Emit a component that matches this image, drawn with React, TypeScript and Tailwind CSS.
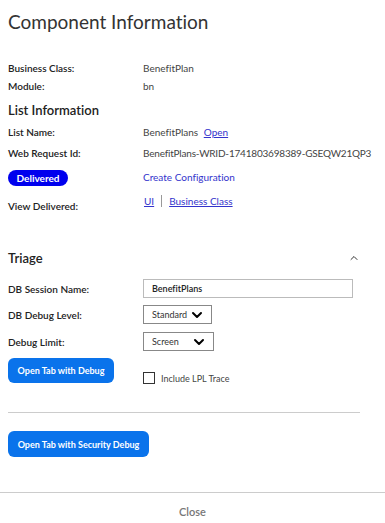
import { ChevronDown, ChevronUp } from "lucide-react";

function Row({ label, children, className = "" }: { label: string; children: React.ReactNode; className?: string }) {
  return (
    <div className={`flex h-[18px] items-center ${className}`}>
      <div className="w-[135px] text-[10px] font-semibold leading-[12px] text-[#222]">{label}</div>
      <div className="flex-1 whitespace-nowrap text-[10px] leading-[12px] text-[#444]">{children}</div>
    </div>
  );
}

function Select({ value, width }: { value: string; width: string }) {
  return (
    <div className={`flex h-[19px] items-center justify-between border border-[#888] pl-[8px] pr-[6px] ${width}`}>
      <span className="text-[9px] leading-[11px] text-[#333]">{value}</span>
      <ChevronDown size={16} strokeWidth={3} className="text-black" />
    </div>
  );
}

export default function App() {
  return (
    <div className="flex h-[523px] w-[385px] flex-col overflow-hidden bg-white font-['Lato',sans-serif] [font-variant-ligatures:none]">
      <div className="min-h-0 flex-1 px-[8px]">
        <h1 className="pt-[10px] text-[19px] font-normal leading-[24px] text-[#333]">Component Information</h1>

        <div className="mt-[25px] flex flex-col">
          <Row label="Business Class:">BenefitPlan</Row>
          <Row label="Module:">bn</Row>
        </div>

        <h2 className="mt-[6px] text-[13px] font-semibold leading-[18px] text-[#222]">List Information</h2>

        <div className="mt-[4px] flex flex-col">
          <Row label="List Name:">
            BenefitPlans{" "}
            <a className="ml-[3px] text-[#3333cc] underline">Open</a>
          </Row>
          <Row label="Web Request Id:" className="mt-[3px]">
            <span className="tracking-[-0.2px]">BenefitPlans-WRID-1741803698389-GSEQW21QP3</span>
          </Row>
          <div className="mt-[4px] flex h-[20px] items-center">
            <div className="w-[135px]">
              <span className="inline-flex h-[16px] w-[60px] items-center justify-center rounded-full bg-[#0000ee] text-[10px] font-bold leading-[12px] text-white">
                Delivered
              </span>
            </div>
            <a className="pt-[2px] text-[10px] leading-[12px] text-[#3333cc]">Create Configuration</a>
          </div>
          <div className="mt-[9px] flex items-start">
            <div className="w-[135px] pt-[5px] text-[10px] font-semibold leading-[12px] text-[#222]">View Delivered:</div>
            <div className="flex items-center text-[10px] leading-[12px] text-[#3333cc]">
              <a className="ml-[1px] underline">UI</a>
              <span className="mx-[7px] h-[12px] w-px bg-[#999]" />
              <a className="underline">Business Class</a>
            </div>
          </div>
        </div>

        <div className="mt-[37px] flex h-[18px] items-center justify-between pr-[17px]">
          <h2 className="text-[13px] font-semibold leading-[18px] text-[#222]">Triage</h2>
          <ChevronUp size={12} strokeWidth={2} className="text-[#333]" />
        </div>

        <div className="mt-[12px] flex flex-col">
          <div className="flex items-center">
            <div className="w-[135px] text-[10px] font-semibold leading-[12px] text-[#222]">DB Session Name:</div>
            <div className="flex h-[19px] w-[210px] items-center border border-[#bbb] pl-[8px] text-[9px] font-semibold leading-[11px] text-[#222]">
              BenefitPlans
            </div>
          </div>
          <div className="mt-[7px] flex items-center">
            <div className="w-[135px] text-[10px] font-semibold leading-[12px] text-[#222]">DB Debug Level:</div>
            <Select value="Standard" width="w-[69px]" />
          </div>
          <div className="mt-[8px] flex items-center">
            <div className="w-[135px] text-[10px] font-semibold leading-[12px] text-[#222]">Debug Limit:</div>
            <Select value="Screen" width="w-[71px]" />
          </div>
        </div>

        <div className="mt-[7px] flex items-start">
          <div className="w-[135px]">
            <button className="block h-[25px] w-[106px] rounded-[6px] bg-[#0a73eb] text-[9px] font-bold leading-[11px] text-white">
              Open Tab with Debug
            </button>
          </div>
          <label className="mt-[14px] flex items-center gap-[6px]">
            <span className="h-[12px] w-[12px] border border-[#333]" />
            <span className="text-[9px] leading-[11px] text-[#444]">Include LPL Trace</span>
          </label>
        </div>

        <div className="mr-[17px] mt-[28px] border-t border-[#ccc]" />

        <button className="mt-[18px] block h-[26px] w-[141px] rounded-[6px] bg-[#0a73eb] text-[9px] font-bold leading-[11px] text-white">
          Open Tab with Security Debug
        </button>
      </div>

      <div className="h-[31px] shrink-0 border-t border-[#ccc] pt-[12px] text-center text-[11px] font-semibold leading-[14px] text-[#777]">
        Close
      </div>
    </div>
  );
}
